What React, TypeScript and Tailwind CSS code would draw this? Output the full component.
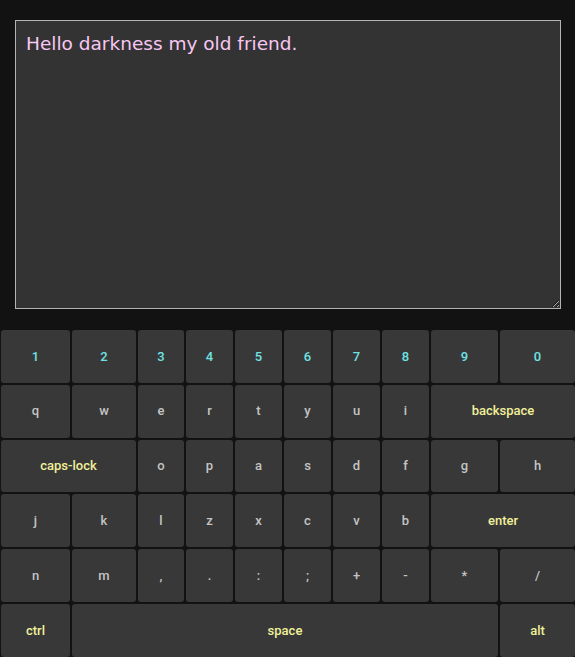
import { useState } from 'react'

type Key = { label: string; kind: 'num' | 'char' | 'fn'; span?: string }

const rows: Key[][] = [
  '1234567890'.split('').map((c) => ({ label: c, kind: 'num' as const })),
  [
    ...'qwertyui'.split('').map((c) => ({ label: c, kind: 'char' as const })),
    { label: 'backspace', kind: 'fn', span: 'col-span-2' },
  ],
  [
    { label: 'caps-lock', kind: 'fn', span: 'col-span-2' },
    ...'opasdfgh'.split('').map((c) => ({ label: c, kind: 'char' as const })),
  ],
  [
    ...'jklzxcvb'.split('').map((c) => ({ label: c, kind: 'char' as const })),
    { label: 'enter', kind: 'fn', span: 'col-span-2' },
  ],
  ['n', 'm', ',', '.', ':', ';', '+', '-', '*', '/'].map((c) => ({ label: c, kind: 'char' as const })),
  [
    { label: 'ctrl', kind: 'fn' },
    { label: 'space', kind: 'fn', span: 'col-span-8' },
    { label: 'alt', kind: 'fn' },
  ],
]

const colors = {
  num: 'text-[#6fe3e3]',
  char: 'text-[#c4c4c4]',
  fn: 'text-[#f0f09a]',
}

export default function App() {
  const [text, setText] = useState('Hello darkness my old friend.')

  return (
    <main className="h-[657px] overflow-hidden bg-[#121212] pt-[20px]">
      <textarea
        value={text}
        onChange={(e) => setText(e.target.value)}
        className="block ml-[15px] w-[546px] h-[289px] bg-[#333333] border border-[#b4b4b4] p-[10px] text-[18.5px] leading-[26px] text-[#f8c8f2] outline-none"
        style={{ fontFamily: '"Comic Sans MS", "DejaVu Sans", cursive' }}
      />

      {/* keyboard: 10 uneven columns, wide keys span */}
      <div className="mt-[21px] h-[327px] grid grid-cols-[69px_64px_46px_47px_47px_47px_47px_47px_67px_75px] grid-rows-6 gap-[2px] pl-[1px] font-['Roboto','Liberation_Sans',Arial,sans-serif] font-medium text-[13px]">
        {rows.flat().map((k, i) => (
          <button
            key={i}
            className={`${k.span ?? ''} ${colors[k.kind]} flex items-center justify-center rounded-[3px] bg-[#383838]`}
          >
            {k.label}
          </button>
        ))}
      </div>
    </main>
  )
}
